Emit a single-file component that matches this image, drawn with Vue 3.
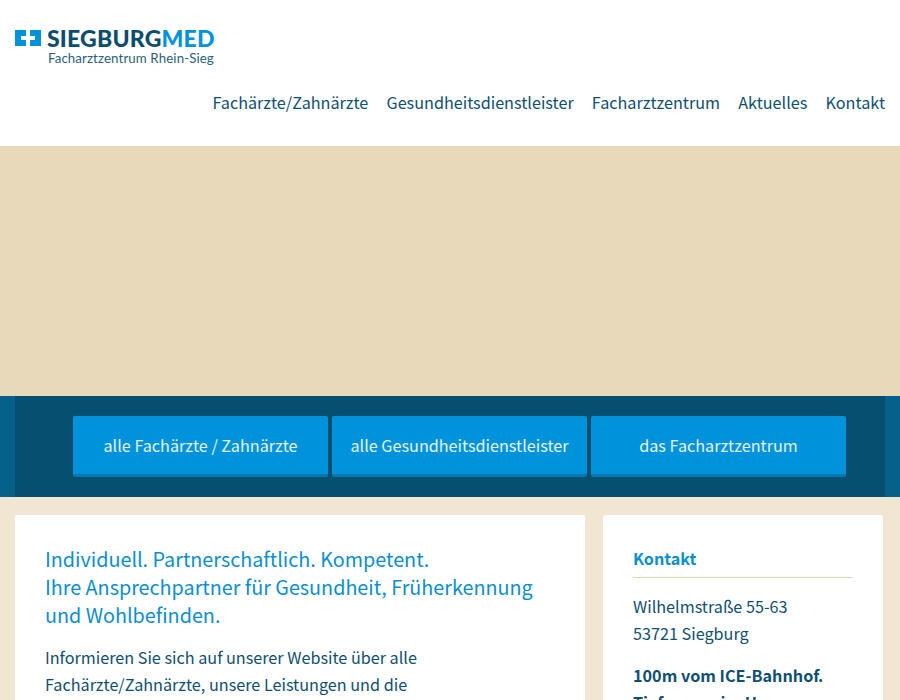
<template>
  <div class="page">
    <header class="site-header">
      <div class="logo">
        <svg class="logo-mark" width="26" height="16" viewBox="0 0 26 16">
          <path fill="#0093dc" fill-rule="evenodd" d="M0 0H26V16H0ZM11 0V6H6V10H11V16H15V10H20V6H15V0Z" />
        </svg>
        <div class="logo-text">
          <div class="logo-name">SIEGBURG<span>MED</span></div>
          <div class="logo-sub">Facharztzentrum Rhein-Sieg</div>
        </div>
      </div>
      <nav class="main-nav">
        <a v-for="item in navItems" :key="item">{{ item }}</a>
      </nav>
    </header>

    <div class="hero"></div>

    <div class="button-bar">
      <div class="button-row">
        <a v-for="btn in buttons" :key="btn" class="bar-button">{{ btn }}</a>
      </div>
    </div>

    <main class="content">
      <section class="card main-card">
        <h1>Individuell. Partnerschaftlich. Kompetent.<br>Ihre Ansprechpartner für Gesundheit, Früherkennung und Wohlbefinden.</h1>
        <p>Informieren Sie sich auf unserer Website über alle Fachärzte/Zahnärzte, unsere Leistungen und die</p>
      </section>
      <aside class="card side-card">
        <h2>Kontakt</h2>
        <p>Wilhelmstraße 55-63<br>53721 Siegburg</p>
        <p class="strong">100m vom ICE-Bahnhof.<br>Tiefgarage im Haus.</p>
      </aside>
    </main>
  </div>
</template>

<script setup>
const navItems = ['Fachärzte/Zahnärzte', 'Gesundheitsdienstleister', 'Facharztzentrum', 'Aktuelles', 'Kontakt']
const buttons = ['alle Fachärzte / Zahnärzte', 'alle Gesundheitsdienstleister', 'das Facharztzentrum']
</script>

<style>
html, body {
  margin: 0;
  height: 700px;
  overflow: hidden;
  background: #f0e6d2;
}
</style>

<style scoped>
.page {
  height: 700px;
  overflow: hidden;
  font-family: "Noto Sans CJK JP", "Noto Sans", sans-serif;
  font-size: 16.2px;
  line-height: 27px;
  color: #0e5072;
}

.site-header {
  height: 146px;
  box-sizing: border-box;
  background: #fff;
  padding: 30px 15px 0;
}

.logo {
  display: flex;
  align-items: flex-start;
  height: 60px;
}

.logo-mark {
  flex: none;
}

.logo-text {
  margin-left: 6px;
}

.logo-name {
  font-family: Lato, sans-serif;
  font-weight: 900;
  font-size: 23px;
  line-height: 17px;
  letter-spacing: 0.2px;
  color: #0a4d6f;
}

.logo-name span {
  color: #0093dc;
}

.logo-sub {
  margin: 4px 0 0 1px;
  font-family: Lato, sans-serif;
  font-size: 13.3px;
  line-height: 15px;
  letter-spacing: 0.1px;
  color: #2a5f7c;
}

.main-nav {
  display: flex;
  justify-content: flex-end;
  gap: 18.2px;
  margin-top: -1px;
}

.hero {
  height: 250px;
  background: #e9d9bb;
}

.button-bar {
  height: 101px;
  box-sizing: border-box;
  padding: 0 15px;
  background: #06618a;
}

.button-row {
  height: 100%;
  box-sizing: border-box;
  display: flex;
  gap: 4px;
  padding: 20px 0 0 58px;
  background: #074f70;
}

.bar-button {
  width: 255px;
  height: 61px;
  box-sizing: border-box;
  display: flex;
  align-items: center;
  justify-content: center;
  border-radius: 2px;
  border-bottom: 3px solid #0678b0;
  background: #0093dc;
  color: #e4f5fd;
}

.content {
  display: flex;
  gap: 18px;
  padding: 18px 17px 0 15px;
}

.card {
  box-sizing: border-box;
  height: 300px;
  border-radius: 2px;
  background: #fff;
}

.main-card {
  width: 570px;
  padding: 30px;
}

.main-card h1 {
  margin: 0 0 15px;
  font-size: 19.75px;
  line-height: 28px;
  font-weight: 400;
  color: #0a8fd2;
}

.main-card p {
  margin: 0;
  width: 400px;
}

.side-card {
  width: 280px;
  padding: 30px;
}

.side-card h2 {
  margin: 0 0 15px;
  padding-bottom: 5px;
  border-bottom: 1px solid #e8d6b0;
  font-size: 16.2px;
  line-height: 27px;
  font-weight: 700;
  color: #0a8fd2;
}

.side-card p {
  margin: 0 0 15px;
}

.side-card .strong {
  font-weight: 700;
}
</style>
